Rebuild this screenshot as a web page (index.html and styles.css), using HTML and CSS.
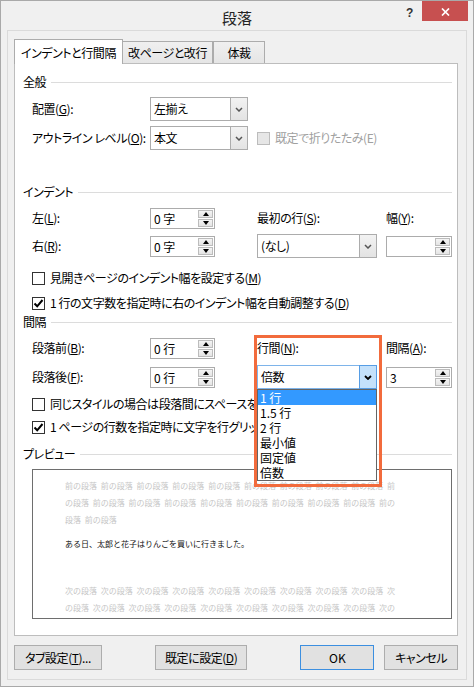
FILE: index.html
```html
<!DOCTYPE html>
<html lang="ja">
<head>
<meta charset="utf-8">
<title>段落</title>
<link rel="stylesheet" href="styles.css">
</head>
<body>
<div class="window">
  <div class="titlebar">
    <div class="title">段落</div>
    <div class="title-controls">
      <span class="help">?</span>
      <span class="close"><svg width="9" height="8" viewBox="0 0 9 8"><path d="M1 0.5 L8 7.5 M8 0.5 L1 7.5" stroke="#fff" stroke-width="1.7" fill="none"/></svg></span>
    </div>
  </div>
  <div class="panel">
    <div class="tabs">
      <div class="tab active t1">インデントと行間隔</div>
      <div class="tab t2">改ページと改行</div>
      <div class="tab t3">体裁</div>
    </div>
    <div class="page">
      <div class="heading h-general">全般</div>
      <div class="grid g-general">
        <div class="lbl">配置(<u>G</u>):</div>
        <div class="select s98"><span class="val">左揃え</span><span class="dd"><svg width="8" height="5" viewBox="0 0 8 5"><path d="M1 1 L4 4 L7 1" stroke="#555" stroke-width="1.5" fill="none"/></svg></span></div>
        <div></div><div></div>
        <div class="lbl">アウトライン レベル(<u>O</u>):</div>
        <div class="select s98"><span class="val">本文</span><span class="dd"><svg width="8" height="5" viewBox="0 0 8 5"><path d="M1 1 L4 4 L7 1" stroke="#555" stroke-width="1.5" fill="none"/></svg></span></div>
        <div class="check disabled span2"><span class="box"></span><span>既定で折りたたみ(E)</span></div>
      </div>

      <div class="heading h-indent">インデント</div>
      <div class="grid g-indent">
        <div class="lbl">左(<u>L</u>):</div>
        <div class="spin"><span class="val">0 字</span><span class="arrows"><span class="up"></span><span class="down"></span></span></div>
        <div class="lbl">最初の行(<u>S</u>):</div>
        <div class="lbl">幅(<u>Y</u>):</div>
        <div class="lbl">右(<u>R</u>):</div>
        <div class="spin"><span class="val">0 字</span><span class="arrows"><span class="up"></span><span class="down"></span></span></div>
        <div class="select s120"><span class="val">(なし)</span><span class="dd"><svg width="8" height="5" viewBox="0 0 8 5"><path d="M1 1 L4 4 L7 1" stroke="#555" stroke-width="1.5" fill="none"/></svg></span></div>
        <div class="spin s66"><span class="val"></span><span class="arrows"><span class="up"></span><span class="down"></span></span></div>
      </div>
      <div class="check c1"><span class="box"></span><span>見開きページのインデント幅を設定する(<u>M</u>)</span></div>
      <div class="check c2"><span class="box checked"><svg width="11" height="11" viewBox="0 0 11 11"><path d="M1.5 5.5 L4.2 8.3 L9.5 2" stroke="#000" stroke-width="2" fill="none"/></svg></span><span>1 行の文字数を指定時に右のインデント幅を自動調整する(<u>D</u>)</span></div>

      <div class="heading h-space">間隔</div>
      <div class="grid g-space">
        <div class="lbl">段落前(<u>B</u>):</div>
        <div class="spin"><span class="val">0 行</span><span class="arrows"><span class="up"></span><span class="down"></span></span></div>
        <div class="lbl">行間(<u>N</u>):</div>
        <div class="lbl">間隔(<u>A</u>):</div>
        <div class="lbl">段落後(<u>F</u>):</div>
        <div class="spin"><span class="val">0 行</span><span class="arrows"><span class="up"></span><span class="down"></span></span></div>
        <div class="select s120 focused">
          <span class="val">倍数</span><span class="dd"><svg width="8" height="5" viewBox="0 0 8 5"><path d="M1 1 L4 4 L7 1" stroke="#000" stroke-width="1.8" fill="none"/></svg></span>
          <div class="list">
            <div class="sel">1 行</div>
            <div>1.5 行</div>
            <div>2 行</div>
            <div>最小値</div>
            <div>固定値</div>
            <div>倍数</div>
          </div>
        </div>
        <div class="spin s66"><span class="val">3</span><span class="arrows"><span class="up"></span><span class="down"></span></span></div>
      </div>
      <div class="check c3"><span class="box"></span><span>同じスタイルの場合は段落間にスペースを追加しない(<u>C</u>)</span></div>
      <div class="check c4"><span class="box checked"><svg width="11" height="11" viewBox="0 0 11 11"><path d="M1.5 5.5 L4.2 8.3 L9.5 2" stroke="#000" stroke-width="2" fill="none"/></svg></span><span>1 ページの行数を指定時に文字を行グリッド線に合わせる(<u>W</u>)</span></div>

      <div class="heading h-preview">プレビュー</div>
      <div class="preview">
        <div class="pline ghost">前の段落 前の段落 前の段落 前の段落 前の段落 前の段落 前の段落 前の段落 前の段落 前</div>
        <div class="pline ghost">の段落 前の段落 前の段落 前の段落 前の段落 前の段落 前の段落 前の段落 前の段落 前の</div>
        <div class="pline ghost">段落 前の段落</div>
        <div class="pline sample">ある日、太郎と花子はりんごを買いに行きました。</div>
        <div class="pline ghost next">次の段落 次の段落 次の段落 次の段落 次の段落 次の段落 次の段落 次の段落 次の段落 次</div>
        <div class="pline ghost">の段落 次の段落 次の段落 次の段落 次の段落 次の段落 次の段落 次の段落 次の段落 次の</div>
      </div>

      <div class="highlight"></div>
    </div>
    <div class="buttons">
      <div class="btn b-tab">タブ設定(<u>T</u>)...</div>
      <div class="btn b-default">既定に設定(<u>D</u>)</div>
      <div class="btn b-ok">OK</div>
      <div class="btn b-cancel">キャンセル</div>
    </div>
  </div>
</div>
</body>
</html>
```

FILE: styles.css
```css
* { box-sizing: border-box; }
html, body { margin: 0; padding: 0; }
body {
  width: 474px;
  height: 687px;
  overflow: hidden;
  background: #f0f0f0;
  font-family: "Noto Sans CJK JP", "Noto Sans", sans-serif;
  font-feature-settings: "palt";
  font-size: 12px;
  letter-spacing: -0.45px;
  color: #000;
}
u { text-decoration: underline; text-underline-offset: 1px; }

.window {
  width: 474px;
  height: 687px;
  border: 1px solid #a9a9a9;
  background: #f0f0f0;
  display: flex;
  flex-direction: column;
}

.titlebar {
  height: 29px;
  flex: none;
  display: grid;
  grid-template-columns: 1fr auto 1fr;
}
.title {
  grid-column: 2;
  font-size: 15px;
  line-height: 15px;
  margin-top: 9px;
  letter-spacing: 0;
  color: #222;
}
.title-controls {
  grid-column: 3;
  display: flex;
  justify-content: flex-end;
  align-items: flex-start;
}
.help {
  font-family: "Liberation Sans", Arial, sans-serif;
  font-weight: bold;
  font-size: 12px;
  line-height: 12px;
  margin-top: 6px;
  margin-right: 9px;
  color: #333;
}
.close {
  width: 46px;
  height: 20px;
  background: #c75050;
  margin-right: 5px;
  display: flex;
  align-items: center;
  justify-content: center;
  padding-top: 2px;
}

.panel {
  flex: none;
  margin: 0 6px 6px 6px;
  height: 650px;
  border: 1px solid #dadada;
  padding: 8px 8px 0 6px;
}

.tabs {
  display: flex;
  align-items: flex-end;
  height: 24px;
}
.tab {
  height: 22px;
  border: 1px solid #acacac;
  border-bottom: none;
  background: linear-gradient(#f0f0f0, #e5e5e5);
  display: flex;
  align-items: center;
  justify-content: center;
  line-height: 16px;
}
.tab.active {
  height: 25px;
  margin-bottom: -1px;
  background: #fff;
  position: relative;
  z-index: 1;
  padding-top: 1px;
}
.t1 { width: 109px; }
.t2 { width: 91px; margin-left: -1px; }
.t3 { width: 52px; }

.page {
  height: 573px;
  border: 1px solid #bdbdbd;
  background: #fff;
  position: relative;
  padding: 10px 5px 0 8px;
}

.heading {
  display: flex;
  align-items: center;
  height: 16px;
  line-height: 16px;
}
.heading::after {
  content: "";
  flex: 1;
  height: 1px;
  background: #dcdcdc;
  margin-left: 5px;
}
.h-indent { margin-top: 34px; }
.h-space { margin-top: 3px; }
.h-preview { margin-top: 11px; }

.grid {
  display: grid;
  grid-template-columns: 118px 107px 129px 66px;
  grid-auto-rows: 24px;
  align-items: center;
  margin-left: 9px;
}
.g-general { margin-top: 7px; row-gap: 5px; }
.g-indent { margin-top: 6px; row-gap: 4px; }
.g-space { margin-top: 6px; row-gap: 5px; }
.lbl { line-height: 16px; white-space: nowrap; }
.span2 { grid-column: 3 / span 2; }

.select {
  height: 24px;
  border: 1px solid #acacac;
  background: #fff;
  display: flex;
  position: relative;
}
.s98 { width: 98px; }
.s120 { width: 120px; }
.select .val {
  flex: 1;
  padding-left: 3px;
  line-height: 22px;
}
.select .dd {
  width: 17px;
  border-left: 1px solid #acacac;
  background: linear-gradient(#f2f2f2, #e3e3e3);
  display: flex;
  align-items: center;
  justify-content: center;
}
.select.focused { border-color: #7eb4ea; }
.select.focused .dd {
  background: #c4e1fb;
  border: 1px solid #569de5;
  margin: -1px -1px -1px 0;
  width: 18px;
}

.list {
  position: absolute;
  left: -1px;
  top: 23px;
  width: 120px;
  border: 1px solid #646464;
  background: #fff;
  z-index: 2;
  padding: 0;
}
.list div {
  height: 15px;
  line-height: 15px;
  padding-left: 2px;
  white-space: nowrap;
  letter-spacing: 0;
}
.list .sel {
  background: #3399ff;
  color: #fff;
}

.spin {
  width: 65px;
  height: 21px;
  border: 1px solid #acacac;
  background: #fff;
  display: flex;
}
.spin.s66 { width: 66px; }
.spin .val {
  flex: 1;
  padding-left: 3px;
  line-height: 19px;
  letter-spacing: 0;
}
.arrows {
  width: 17px;
  padding: 1px;
  display: flex;
  flex-direction: column;
  gap: 1px;
}
.arrows span {
  flex: 1;
  border: 1px solid #bcbcbc;
  background: linear-gradient(#f4f4f4, #e4e4e4);
  display: flex;
  align-items: center;
  justify-content: center;
}
.arrows .up::before {
  content: "";
  border-left: 3.5px solid transparent;
  border-right: 3.5px solid transparent;
  border-bottom: 4px solid #000;
}
.arrows .down::before {
  content: "";
  border-left: 3.5px solid transparent;
  border-right: 3.5px solid transparent;
  border-top: 4px solid #000;
}

.check {
  display: flex;
  align-items: center;
  height: 16px;
  gap: 5px;
  white-space: nowrap;
  line-height: 16px;
}
.check .box {
  width: 13px;
  height: 13px;
  border: 1px solid #333;
  background: #fff;
  flex: none;
  display: flex;
  align-items: center;
  justify-content: center;
}
.check.disabled { color: #a0a0a0; }
.check.disabled .box { border-color: #bcbcbc; background: #e6e6e6; }
.c1, .c2, .c3, .c4 { margin-left: 9px; }
.c1 { margin-top: 12px; }
.c2 { margin-top: 9px; }
.c3 { margin-top: 7px; }
.c4 { margin-top: 7px; }

.preview {
  margin: 7px 0 0 9px;
  width: 420px;
  height: 150px;
  border: 1px solid #6e6e6e;
  background: #fff;
  overflow: hidden;
  padding: 7px 0 0 32px;
  font-size: 8px;
  line-height: 17px;
  letter-spacing: 0;
  font-feature-settings: normal;
}
.pline { white-space: nowrap; height: 17px; }
.ghost { color: #c6c6c6; word-spacing: 2px; }
.sample { color: #111; margin-top: 7px; }
.next { margin-top: 30px; }

.highlight {
  position: absolute;
  left: 239px;
  top: 271px;
  width: 128px;
  height: 152px;
  border: 3px solid #f26b3c;
  z-index: 3;
}

.buttons {
  display: flex;
  margin-top: 9px;
}
.btn {
  height: 25px;
  border: 1px solid #adadad;
  background: #e1e1e1;
  display: flex;
  align-items: center;
  justify-content: center;
  white-space: nowrap;
  line-height: 16px;
}
.b-tab { width: 88px; }
.b-default { width: 93px; margin-left: 53px; }
.b-ok { width: 74px; margin-left: 53px; border-color: #3c8fe0; letter-spacing: 0; }
.b-cancel { width: 74px; margin-left: 10px; }
```
